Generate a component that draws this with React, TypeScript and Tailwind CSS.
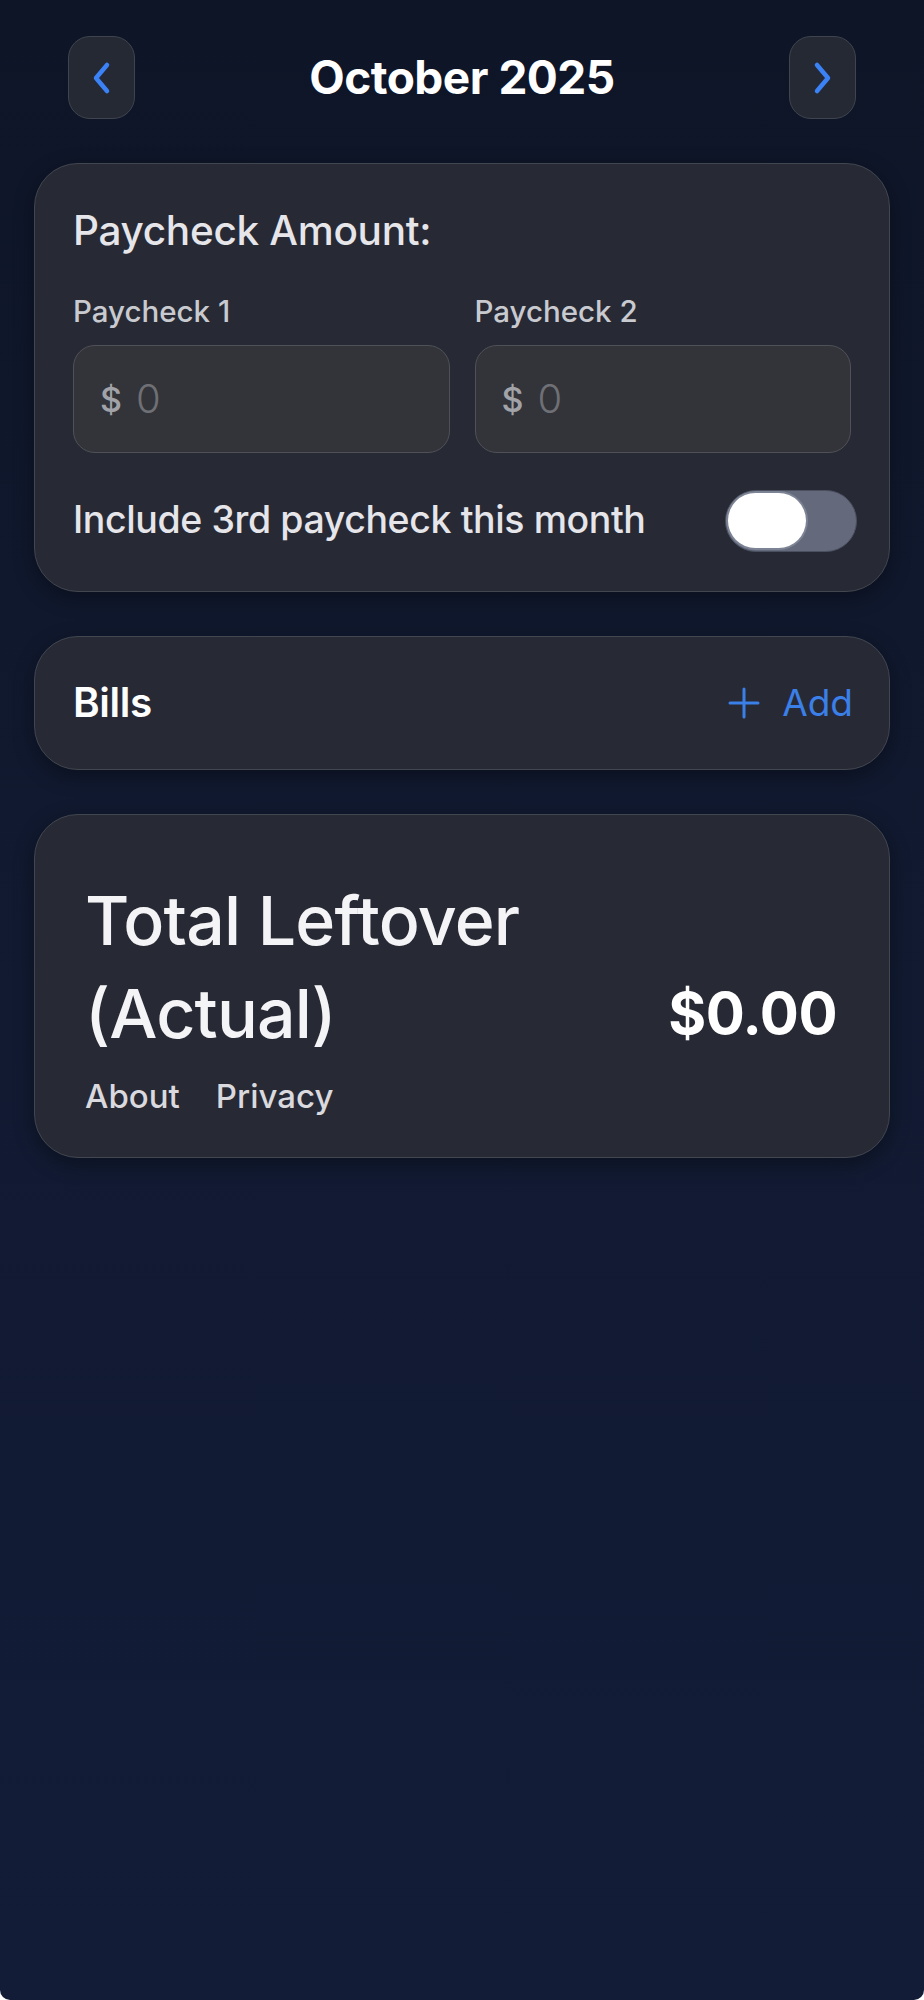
import React, { useState } from 'react';

const Chevron = ({ dir }: { dir: 'left' | 'right' }) => (
  <svg width="26" height="34" viewBox="0 0 26 34" fill="none">
    <path
      d={dir === 'left' ? 'M18 4 L7 17 L18 30' : 'M8 4 L19 17 L8 30'}
      stroke="#3b82f6"
      strokeWidth="4.5"
      strokeLinecap="round"
      strokeLinejoin="round"
    />
  </svg>
);

const MoneyInput = ({ label }: { label: string }) => (
  <div className="flex-1 flex flex-col">
    <label className="text-[29.5px] leading-[34px] font-medium text-[#c9cad0]">{label}</label>
    <div className="mt-[17px] h-[108px] flex items-center px-[26px] rounded-[22px] bg-[#333439] border-[1.5px] border-[#505158]">
      <span className="text-[34px] font-medium text-[#a2a3a9]">$</span>
      <span className="ml-[14px] text-[40px] font-light text-[#6f7076]">0</span>
    </div>
  </div>
);

export default function App() {
  const [third, setThird] = useState(false);

  return (
    <div
      className="min-h-[2000px] rounded-b-[10px] bg-gradient-to-b from-[#0e1527] via-[#111a31] to-[#131c37] px-[34px] pt-[36px]"
      style={{ fontFamily: 'Inter, "Noto Sans", sans-serif' }}
    >
      {/* month switcher */}
      <div className="flex items-center justify-between px-[34px]">
        <button className="w-[67px] h-[83px] rounded-[22px] bg-[#252934] border-[1.5px] border-[#40444e] flex items-center justify-center">
          <Chevron dir="left" />
        </button>
        <h1 className="text-[46px] font-bold text-white tracking-[-0.5px]">October 2025</h1>
        <button className="w-[67px] h-[83px] rounded-[22px] bg-[#252934] border-[1.5px] border-[#40444e] flex items-center justify-center">
          <Chevron dir="right" />
        </button>
      </div>

      {/* paychecks */}
      <div className="mt-[44px] rounded-[44px] bg-[#272a35] border-[1.5px] border-[#42464f] shadow-[0_6px_20px_rgba(0,0,0,0.35)] px-[38px] pt-[44px] pb-[40px]">
        <h2 className="text-[40.5px] leading-[46px] font-medium text-[#e6e6ea] tracking-[-0.3px]">Paycheck Amount:</h2>
        <div className="mt-[40px] flex gap-[25px]">
          <MoneyInput label="Paycheck 1" />
          <MoneyInput label="Paycheck 2" />
        </div>
        <div className="mt-[37px] h-[61px] flex items-center justify-between">
          <span className="text-[37.5px] font-medium text-[#e5e5ea] tracking-[-0.4px]">Include 3rd paycheck this month</span>
          <button
            onClick={() => setThird(!third)}
            className="w-[132px] h-[62px] rounded-full bg-[#646a7c] border-[1.5px] border-[#4b5060] flex items-center px-[2px] -mr-[6px]"
          >
            <span className="w-[78px] h-[55px] rounded-full bg-white shadow-[0_0_0_2px_rgba(140,148,165,0.6)]" />
          </button>
        </div>
      </div>

      {/* bills */}
      <div className="mt-[44px] h-[134px] rounded-[44px] bg-[#272a35] border-[1.5px] border-[#42464f] shadow-[0_6px_20px_rgba(0,0,0,0.35)] pl-[38px] pr-[36px] flex items-center justify-between">
        <span className="text-[40.5px] font-semibold text-white tracking-[-0.4px]">Bills</span>
        <button className="flex items-center gap-[22px] text-[#3b7fe8]">
          <svg width="32" height="32" viewBox="0 0 32 32">
            <path d="M16 2 V30 M2 16 H30" stroke="#3b7fe8" strokeWidth="3" strokeLinecap="round" />
          </svg>
          <span className="text-[37px] font-normal">Add</span>
        </button>
      </div>

      {/* totals */}
      <div className="mt-[44px] rounded-[44px] bg-[#272a35] border-[1.5px] border-[#42464f] shadow-[0_6px_20px_rgba(0,0,0,0.35)] px-[50px] pt-[59px] pb-[41px]">
        <div className="flex items-end justify-between">
          <h2 className="text-[68px] leading-[93px] font-medium text-[#f4f4f6] tracking-[-0.8px]">
            Total Leftover
            <br />
            (Actual)
          </h2>
          <span className="text-[58px] leading-[93px] font-bold text-white tracking-[-0.5px] mr-[2px]">$0.00</span>
        </div>
        <div className="mt-[16px] flex gap-[36px] text-[33px] leading-[40px] font-medium text-[#d9d9de]">
          <a href="#">About</a>
          <a href="#">Privacy</a>
        </div>
      </div>
    </div>
  );
}
